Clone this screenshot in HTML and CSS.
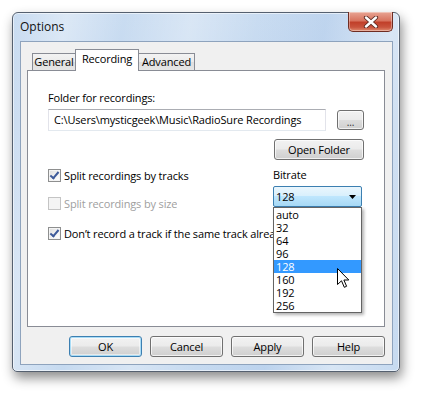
FILE: index.html
```html
<!DOCTYPE html>
<html>
<head>
<meta charset="utf-8">
<link rel="stylesheet" href="styles.css">
</head>
<body>
<div class="window">
  <div class="titlebar">
    <span class="title">Options</span>
    <div class="close">
      <svg width="16" height="12" viewBox="0 0 16 12"><path d="M3 1.5 L13 10.5 M13 1.5 L3 10.5" stroke="#5a2a22" stroke-width="4.2" stroke-linecap="round"/><path d="M3 1.5 L13 10.5 M13 1.5 L3 10.5" stroke="#fff" stroke-width="2.4" stroke-linecap="round"/></svg>
    </div>
  </div>
  <div class="client">
    <div class="tabs">
      <div class="tab">General</div>
      <div class="tab active">Recording</div>
      <div class="tab">Advanced</div>
    </div>
    <div class="page">
      <div class="label">Folder for recordings:</div>
      <div class="path-row">
        <div class="input">C:\Users\mysticgeek\Music\RadioSure Recordings</div>
        <div class="btn dots">...</div>
      </div>
      <div class="open-row"><div class="btn open">Open Folder</div></div>
      <div class="opts">
        <div class="checks">
          <div class="check-row"><span class="cb checked"></span><span class="txt">Split recordings by tracks</span></div>
          <div class="check-row disabled"><span class="cb"></span><span class="txt">Split recordings by size</span></div>
          <div class="check-row third"><span class="cb checked"></span><span class="txt">Don’t record a track if the same track alread</span></div>
        </div>
        <div class="bitrate">
          <div class="blabel">Bitrate</div>
          <div class="combo">
            <span>128</span>
            <svg class="caret" width="7" height="4" viewBox="0 0 7 4"><path d="M0 0 H7 L3.5 4 Z" fill="#000"/></svg>
            <div class="list">
              <div class="item">auto</div>
              <div class="item">32</div>
              <div class="item">64</div>
              <div class="item">96</div>
              <div class="item sel">128</div>
              <div class="item">160</div>
              <div class="item">192</div>
              <div class="item">256</div>
            </div>
          </div>
        </div>
      </div>
    </div>
    <div class="buttons">
      <div class="btn dlg default">OK</div>
      <div class="btn dlg">Cancel</div>
      <div class="btn dlg">Apply</div>
      <div class="btn dlg">Help</div>
    </div>
  </div>
  <svg class="cursor" width="13" height="21" viewBox="0 0 13 21"><path d="M0.5 0.5 L0.5 16.5 L4.5 12.8 L7.3 19.3 L9.6 18.3 L6.9 12 L11.8 12 Z" fill="#fff" stroke="#000" stroke-width="1" stroke-linejoin="miter"/></svg>
</div>
</body>
</html>
```
FILE: styles.css
```css
* { box-sizing: border-box; }
body {
  margin: 0;
  background: #fff;
  font-family: "Open Sans", "Noto Sans", sans-serif;
  font-size: 11px;
  letter-spacing: -0.15px;
  color: #000;
  width: 421px;
  height: 393px;
  overflow: hidden;
}
.window {
  position: relative;
  margin: 12px 0 0 12px;
  width: 388px;
  height: 360px;
  border: 1px solid #55606f;
  border-radius: 6px 6px 5px 5px;
  padding: 0 6px 6px 7px;
  background:
    linear-gradient(100deg, rgba(255,255,255,0) 0%, rgba(255,255,255,0.35) 12%, rgba(255,255,255,0) 25%, rgba(255,255,255,0.3) 40%, rgba(255,255,255,0) 55%, rgba(160,190,230,0.25) 70%, rgba(255,255,255,0.3) 85%, rgba(255,255,255,0) 100%),
    linear-gradient(180deg, #c9dcf1 0%, #c4d8ef 30%, #c6daf0 100%);
  box-shadow: 2px 6px 12px rgba(0,0,0,0.45), inset 0 0 0 1px rgba(255,255,255,0.55);
}
.titlebar {
  height: 28px;
  display: flex;
  justify-content: space-between;
  align-items: flex-start;
}
.title {
  font-size: 12px;
  line-height: 28px;
  color: #111;
  letter-spacing: 0;
}
.close {
  margin-top: -1px;
  width: 45px;
  height: 20px;
  border: 1px solid #6e2c22;
  border-top: none;
  border-radius: 0 0 5px 5px;
  background: linear-gradient(180deg, #e8a493 0%, #d8745f 45%, #c1402a 55%, #c9543d 80%, #e08c70 100%);
  box-shadow: inset 0 0 0 1px rgba(255,255,255,0.35);
  display: flex;
  align-items: center;
  justify-content: center;
}
.client {
  height: 324px;
  border: 1px solid #8ea3bd;
  background: #f0f0f0;
  padding: 7px 7px 7px 6px;
  display: flex;
  flex-direction: column;
}
.tabs {
  display: flex;
  align-items: flex-end;
  height: 22px;
  margin-bottom: -1px;
  padding-left: 5px;
  position: relative;
  z-index: 1;
}
.tab {
  height: 17px;
  border: 1px solid #898c95;
  border-bottom: none;
  background: linear-gradient(180deg, #f3f3f3 0%, #ebebeb 50%, #dedede 51%, #e6e6e6 100%);
  line-height: 16px;
  padding: 0;
  margin-bottom: 1px;
  text-align: center;
  white-space: nowrap;
}
.tab:first-child { width: 44px; }
.tab:nth-child(3) { width: 57px; margin-left: -1px; }
.tab.active {
  height: 22px;
  width: 64px;
  margin: 0 0 0 -1px;
  background: #fff;
  line-height: 18px;
  position: relative;
  z-index: 2;
}
.page {
  height: 257px;
  width: 358px;
  border: 1px solid #898c95;
  background: #fff;
  padding: 19px 20px 0 20px;
}
.label { line-height: 15px; }
.path-row {
  display: flex;
  align-items: flex-start;
  margin-top: 4px;
  gap: 11px;
}
.input {
  width: 278px;
  height: 22px;
  border: 1px solid #e2e3ea;
  border-top-color: #abadb3;
  border-bottom-color: #e3e9ef;
  padding-left: 5px;
  line-height: 20px;
  white-space: nowrap;
  overflow: hidden;
}
.btn {
  border: 1px solid #707070;
  border-radius: 3px;
  background: linear-gradient(180deg, #f2f2f2 0%, #ebebeb 48%, #dddddd 52%, #cfcfcf 100%);
  box-shadow: inset 0 0 0 1px rgba(255,255,255,0.7);
  text-align: center;
  display: flex;
  align-items: center;
  justify-content: center;
}
.dots {
  width: 27px;
  height: 20px;
  margin-top: 1px;
  font-size: 10px;
  line-height: 1;
  padding-top: 3px;
  color: #333;
}
.open-row {
  display: flex;
  justify-content: flex-end;
  margin-top: 8px;
}
.open { width: 90px; height: 21px; }
.opts {
  display: flex;
  margin-top: 8px;
}
.checks {
  width: 225px;
  display: flex;
  flex-direction: column;
}
.check-row {
  display: flex;
  align-items: center;
  height: 15px;
  white-space: nowrap;
  gap: 3px;
  min-width: 0;
}
.txt {
  min-width: 0;
  overflow: hidden;
}
.check-row + .check-row { margin-top: 13px; }
.check-row.third { margin-top: 15px; }
.check-row.disabled { color: #a0a0a0; }
.cb {
  width: 13px;
  height: 13px;
  flex: none;
  border: 1px solid #8e8f8f;
  background: linear-gradient(135deg, #dcdcdc 0%, #f4f4f4 60%, #fff 100%);
  box-shadow: inset 0 0 0 1px #f4f4f4;
  position: relative;
}
.disabled .cb {
  border-color: #c4c4c4;
  background: #f4f4f4;
}
.cb.checked::after {
  content: "";
  position: absolute;
  left: 3px;
  top: 0px;
  width: 3px;
  height: 7px;
  border: solid #3d5a9a;
  border-width: 0 2px 2px 0;
  transform: rotate(40deg);
}
.bitrate {
  width: 89px;
  display: flex;
  flex-direction: column;
}
.blabel { line-height: 15px; margin-top: -1px; }
.combo {
  position: relative;
  margin-top: 4px;
  height: 21px;
  border: 1px solid #3c7fb1;
  border-radius: 2px;
  background: linear-gradient(180deg, #eaf6fd 0%, #d9f0fc 45%, #bee6fd 50%, #a7d9f5 100%);
  display: flex;
  align-items: center;
  padding: 0 5px 0 2px;
  justify-content: space-between;
}
.list {
  position: absolute;
  left: -1px;
  top: 20px;
  width: 89px;
  height: 106px;
  border: 1px solid #646464;
  background: #fff;
  box-shadow: 2px 2px 3px rgba(0,0,0,0.3);
  z-index: 3;
}
.item {
  height: 13px;
  line-height: 13px;
  padding-left: 2px;
}
.item.sel { background: #3399ff; color: #fff; }
.buttons {
  display: flex;
  justify-content: flex-end;
  gap: 8px;
  margin-top: 9px;
}
.dlg { width: 73px; height: 21px; }
.default {
  border-color: #3c7fb1;
  box-shadow: inset 0 0 0 1px #a9dcf6, inset 0 0 0 2px rgba(255,255,255,0.5);
}
.cursor {
  position: absolute;
  left: 324px;
  top: 255px;
  z-index: 5;
}
```
